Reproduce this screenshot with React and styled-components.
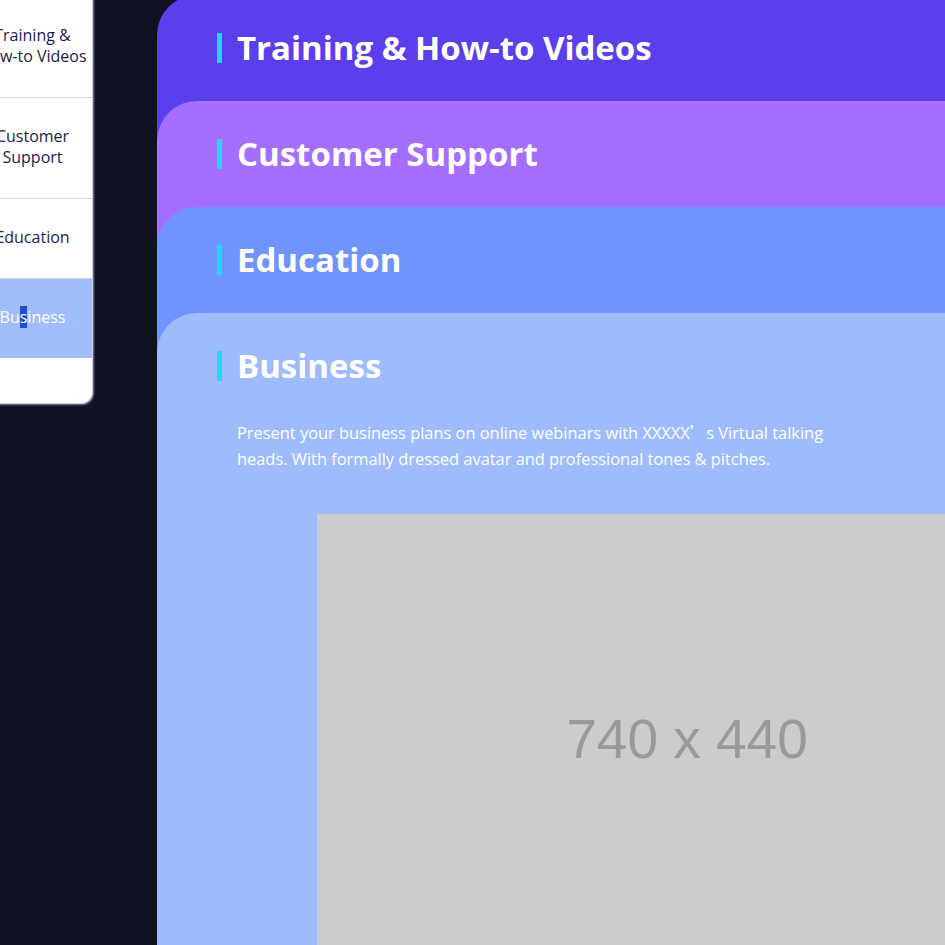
import React from 'react';
import styled, { createGlobalStyle } from 'styled-components';

const Global = createGlobalStyle`
  html, body {
    margin: 0;
    padding: 0;
    background: #0f1221;
    overflow: hidden;
    font-family: 'Open Sans', 'Noto Sans', sans-serif;
  }
`;

const Page = styled.div`
  display: flex;
  align-items: flex-start;
  height: 945px;
  overflow: hidden;
`;

const Sidebar = styled.nav`
  flex: none;
  width: 119px;
  margin: -4px 0 0 -28px;
  padding-bottom: 45px;
  background: #fff;
  border: 1px solid #c9cbe0;
  border-top: none;
  border-radius: 0 0 12px 0;
  box-shadow: 1px 1px 2px rgba(170, 175, 220, 0.7);
`;

const NavItem = styled.div`
  padding: 28px 0 30px;
  text-align: center;
  font-size: 16px;
  line-height: 21px;
  color: ${(p) => (p.active ? '#fff' : '#1d1b4c')};
  background: ${(p) => (p.active ? '#a0bdfc' : 'transparent')};
  border-bottom: ${(p) => (p.active ? 'none' : '1px solid #cfd1dc')};

  &:first-child {
    padding-top: 29px;
  }
`;

const Selected = styled.span`
  background: #1f4fcf;
  color: #fff;
`;

const Main = styled.main`
  flex: none;
  width: 1060px;
  margin-left: 64px;
  margin-top: -5px;
`;

const Card = styled.section`
  position: relative;
  min-height: ${(p) => (p.open ? '0' : '146px')};
  margin-bottom: ${(p) => (p.open ? '0' : '-40px')};
  padding: 38px 60px 0;
  background: ${(p) => p.bg};
  border-radius: 40px 40px 0 0;
  box-sizing: border-box;
`;

const Heading = styled.h2`
  display: flex;
  align-items: center;
  gap: 15px;
  margin: 0;
  font-size: 33px;
  line-height: 30px;
  font-weight: 700;
  color: #fff;

  &::before {
    content: '';
    flex: none;
    width: 5px;
    height: 30px;
    background: #1ed9f6;
  }
`;

const Text = styled.p`
  width: 610px;
  margin: 38px 0 0 20px;
  font-size: 16.4px;
  line-height: 26px;
  color: #fff;
`;

const Wide = styled.span`
  font-family: 'Noto Sans CJK SC', sans-serif;
`;

const Placeholder = styled.div`
  display: flex;
  align-items: center;
  justify-content: center;
  width: 740px;
  height: 440px;
  box-sizing: border-box;
  padding-top: 10px;
  margin: 42px 0 0 100px;
  background: #cccccc;
  color: #999;
  font-family: 'Liberation Sans', Arial, sans-serif;
  font-size: 55px;
`;

const sections = [
  { title: 'Training & How-to Videos', bg: '#5b3fed' },
  { title: 'Customer Support', bg: '#a46ffe' },
  { title: 'Education', bg: '#7094fe' },
  { title: 'Business', bg: '#9ebcfd', open: true },
];

export default function App() {
  return (
    <>
      <Global />
      <Page>
        <Sidebar>
          <NavItem>
            Training &amp;
            <br />
            How-to Videos
          </NavItem>
          <NavItem>
            Customer
            <br />
            Support
          </NavItem>
          <NavItem>Education</NavItem>
          <NavItem active>
            Bu<Selected>s</Selected>iness
          </NavItem>
        </Sidebar>
        <Main>
          {sections.map((s) => (
            <Card key={s.title} bg={s.bg} open={s.open}>
              <Heading>{s.title}</Heading>
              {s.open && (
                <>
                  <Text>
                    Present your business plans on online webinars with XXXXX<Wide>’</Wide>s Virtual talking
                    heads. With formally dressed avatar and professional tones &amp; pitches.
                  </Text>
                  <Placeholder>740 x 440</Placeholder>
                </>
              )}
            </Card>
          ))}
        </Main>
      </Page>
    </>
  );
}
